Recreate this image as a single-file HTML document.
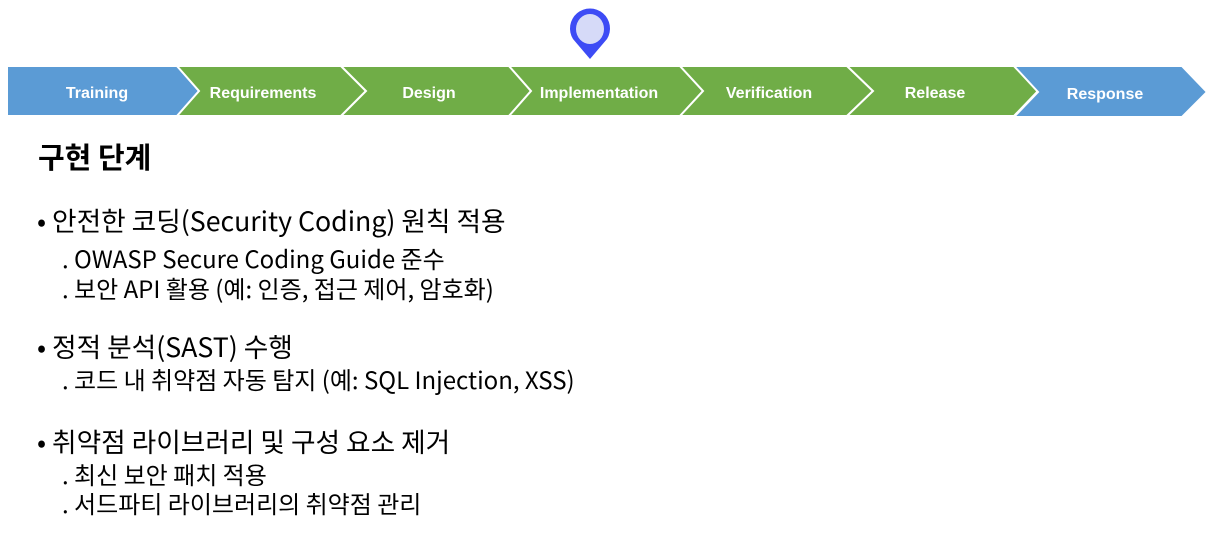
<!DOCTYPE html>
<html><head><meta charset="utf-8"><style>
body{margin:0;width:1210px;height:538px;background:#fff;overflow:hidden;position:relative;font-family:"Noto Sans CJK KR","Liberation Sans",sans-serif;color:#000}
.t{position:absolute;white-space:nowrap;line-height:1}
.h{left:38px;top:142px;font-size:29px;font-weight:bold}
.b{left:37px;font-size:26.7px}
.s{left:62px;font-size:24px}
</style></head><body>
<svg width="1210" height="130" style="position:absolute;left:0;top:0" font-family="Liberation Sans, sans-serif" font-weight="bold" font-size="16" fill="#fff">
<g stroke="#fff" stroke-width="2">
<polygon points="7,66 177,66 199,91 177,116 7,116" fill="#5b9bd5"/>
<polygon points="177,66 341,66 366,91 341,116 177,116 199,91" fill="#70ad47"/>
<polygon points="341,66 509,66 531,91 509,116 341,116 366,91" fill="#70ad47"/>
<polygon points="509,66 680,66 703,91 680,116 509,116 531,91" fill="#70ad47"/>
<polygon points="680,66 847,66 873,91 847,116 680,116 703,91" fill="#70ad47"/>
<polygon points="847,66 1014,66 1038,91 1014,116 847,116 873,91" fill="#70ad47"/>
<polygon points="1014,66 1182,66 1207,92 1182,117 1014,117 1038,92" fill="#5b9bd5"/>
</g>
<g text-anchor="middle">
<text x="97" y="98">Training</text>
<text x="263" y="98">Requirements</text>
<text x="429" y="98">Design</text>
<text x="599" y="98">Implementation</text>
<text x="769" y="98">Verification</text>
<text x="935" y="98">Release</text>
<text x="1105" y="99">Response</text>
</g>
<path d="M590 59 L573 39 A20 20 0 1 1 607 39 Z" fill="#3d4bf5"/>
<ellipse cx="590" cy="29" rx="14" ry="15" fill="#d6daf8"/>
</svg>
<div class="t h">구현 단계</div>
<div class="t b" style="top:207px">• 안전한 코딩(Security Coding) 원칙 적용</div>
<div class="t s" style="top:246px">. OWASP Secure Coding Guide 준수</div>
<div class="t s" style="top:276px">. 보안 API 활용 (예: 인증, 접근 제어, 암호화)</div>
<div class="t b" style="top:333px">• 정적 분석(SAST) 수행</div>
<div class="t s" style="top:367px">. 코드 내 취약점 자동 탐지 (예: SQL Injection, XSS)</div>
<div class="t b" style="top:428px">• 취약점 라이브러리 및 구성 요소 제거</div>
<div class="t s" style="top:462px">. 최신 보안 패치 적용</div>
<div class="t s" style="top:491px">. 서드파티 라이브러리의 취약점 관리</div>
</body></html>
